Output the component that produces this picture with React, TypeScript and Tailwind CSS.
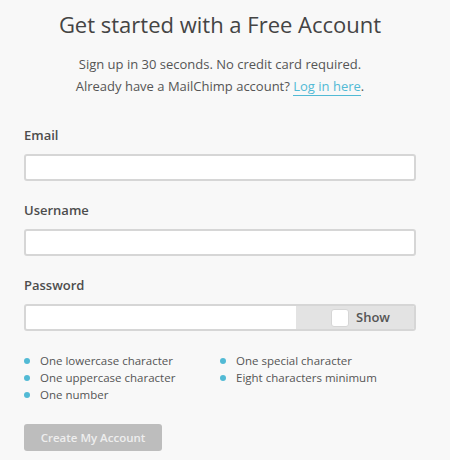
const rules = [
  "One lowercase character",
  "One uppercase character",
  "One number",
  "One special character",
  "Eight characters minimum",
]

function Field({ label, children }: { label: string; children: React.ReactNode }) {
  return (
    <div className="flex flex-col">
      <label className="text-[13px] leading-[18px] font-semibold text-[#4d4d4d]">{label}</label>
      <div className="mt-[10px]">{children}</div>
    </div>
  )
}

export default function App() {
  return (
    <div
      className="min-h-[460px] w-[450px] bg-[#f8f8f8] text-[#555]"
      style={{ fontFamily: '"Open Sans", "Noto Sans", sans-serif' }}
    >
      <div className="w-[440px] px-6 pt-[9px]">
        <h1 className="text-center text-[22px] leading-[30px] font-normal text-[#444]">
          Get started with a Free Account
        </h1>
        <p className="mt-[14px] text-center text-[13px] leading-[22px] text-[#555]">
          Sign up in 30 seconds. No credit card required.
          <br />
          Already have a MailChimp account?{" "}
          <a href="#" className="border-b border-[#52bad5] text-[#52bad5]">
            Log in here
          </a>
          .
        </p>

        <div className="mt-[29px] flex flex-col gap-5">
          <Field label="Email">
            <input className="h-[27px] w-full rounded-[3px] border-2 border-[#d6d6d6] bg-white px-2 text-sm outline-none" />
          </Field>
          <Field label="Username">
            <input className="h-[27px] w-full rounded-[3px] border-2 border-[#d6d6d6] bg-white px-2 text-sm outline-none" />
          </Field>
          <Field label="Password">
            <div className="flex h-[27px] w-full overflow-hidden rounded-[3px] border-2 border-[#d6d6d6] bg-white">
              <input type="password" className="min-w-0 flex-1 px-2 text-sm outline-none" />
              <label className="flex w-[118px] items-center gap-[7px] bg-[#e3e3e3] pl-[35px]">
                <span className="h-[18px] w-[18px] rounded-[3px] border border-[#d6d6d6] bg-white" />
                <span className="text-[13px] font-semibold text-[#555]">Show</span>
              </label>
            </div>
          </Field>
        </div>

        <ul className="mt-[21px] grid grid-flow-col grid-cols-2 grid-rows-3 text-[11.5px] leading-[17px] text-[#555]">
          {rules.map((r) => (
            <li key={r} className="flex items-center gap-[10px]">
              <span className="h-[6px] w-[6px] rounded-full bg-[#52bad5]" />
              {r}
            </li>
          ))}
        </ul>

        <button className="mt-[21px] h-[27px] w-[138px] rounded-[3px] bg-[#bdbdbd] text-[11.5px] font-semibold text-[#eeeeee]">
          Create My Account
        </button>
      </div>
    </div>
  )
}
